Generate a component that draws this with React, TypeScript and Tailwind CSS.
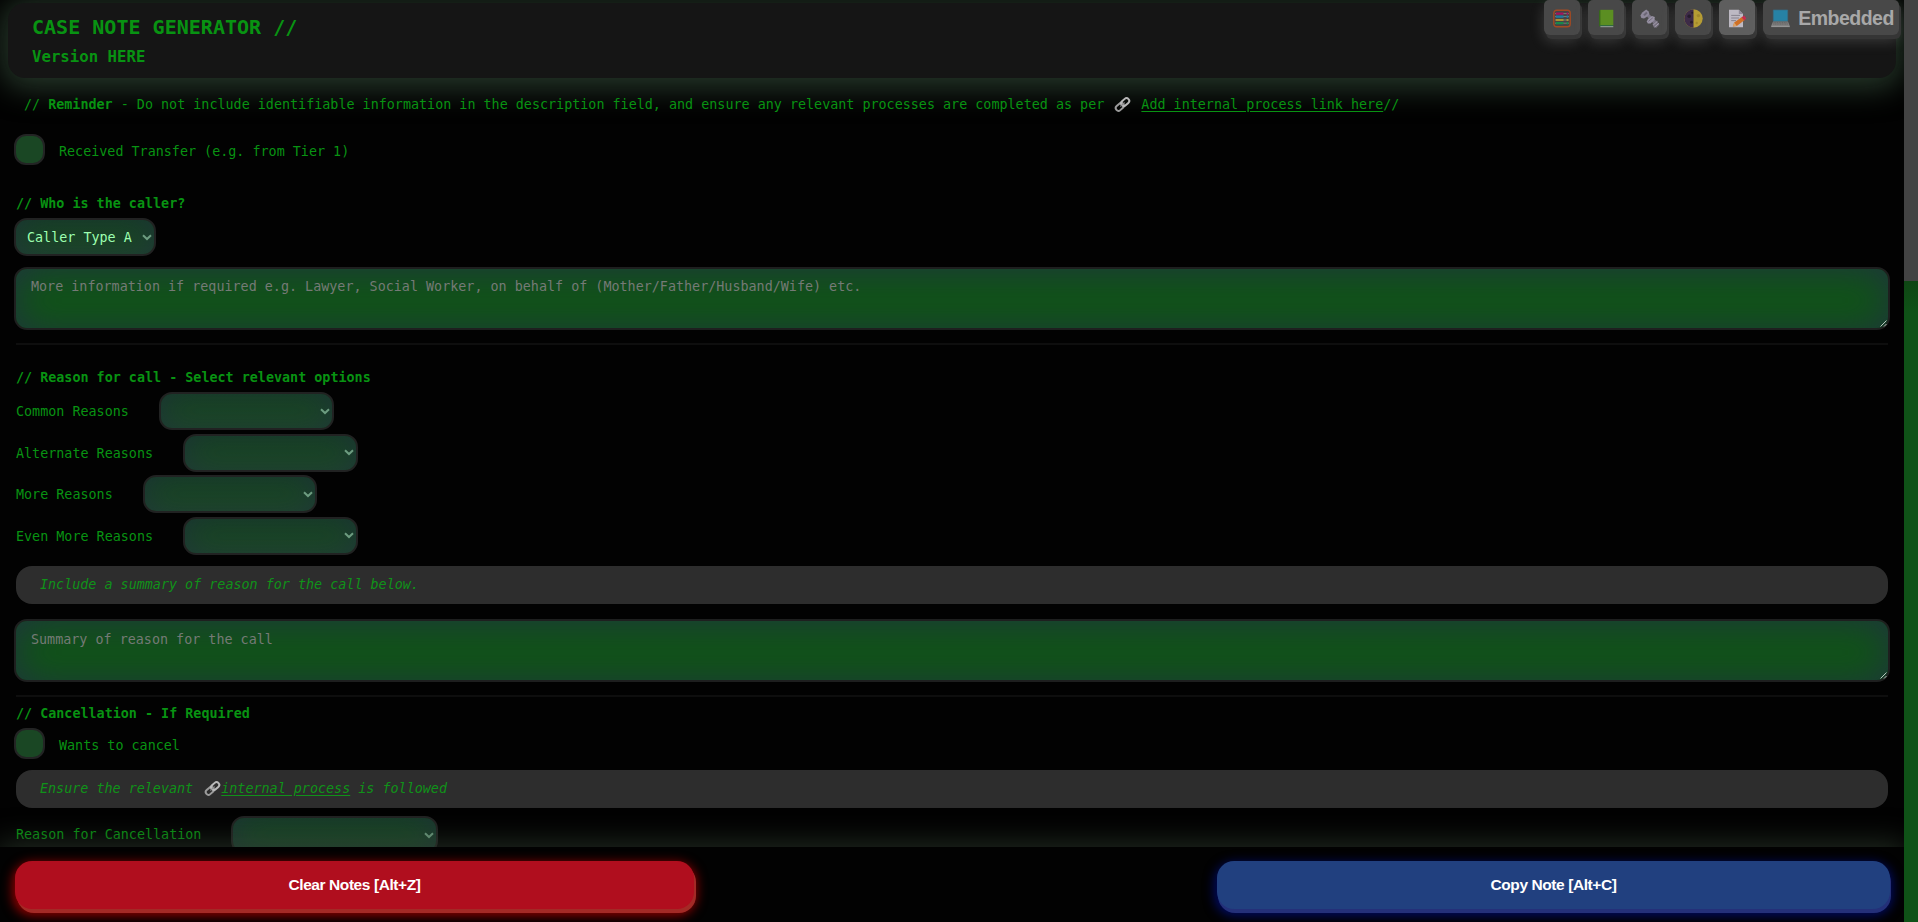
import type { ReactNode } from "react";

const fieldShadow = "shadow-[inset_0_2px_38px_0_rgba(36,42,74,0.76)]";

function Mono({ children, className = "" }: { children: ReactNode; className?: string }) {
  return <span className={`whitespace-pre ${className}`}>{children}</span>;
}

function Heading({ children, className = "" }: { children: ReactNode; className?: string }) {
  return (
    <h2 className={`ml-[16px] h-[20px] shrink-0 whitespace-pre pt-px font-bold leading-[20px] text-[#089312] ${className}`}>
      {children}
    </h2>
  );
}

function Chevron() {
  return (
    <svg width="10" height="7" viewBox="0 0 10 7" className="shrink-0" fill="none" stroke="#6d9c80" strokeWidth="2">
      <path d="M1 1.2 5 5 9 1.2" />
    </svg>
  );
}

function Select({ value = "", className = "" }: { value?: string; className?: string }) {
  return (
    <div
      className={`flex h-[38px] shrink-0 items-center justify-between rounded-[13px] border-2 border-[#212222] bg-linear-to-b from-[#15431f] to-[#1c4a25] pr-[2px] pl-[11px] text-[#9dffb0] shadow-[inset_0_0_34px_-3px_rgba(34,38,72,0.6)] ${className}`}
    >
      <Mono className="pt-[2px]">{value}</Mono>
      <Chevron />
    </div>
  );
}

function Area({ placeholder, className = "" }: { placeholder: string; className?: string }) {
  return (
    <div
      className={`relative ml-[14px] h-[63px] w-[1876px] shrink-0 rounded-[13px] border-2 border-[#1e1f1f] bg-[#105417] pt-[8px] pl-[15px] leading-[20px] text-[#757a76] ${fieldShadow} ${className}`}
    >
      <Mono>{placeholder}</Mono>
      <svg width="7" height="7" viewBox="0 0 7 7" className="absolute right-[1px] bottom-[1px]" stroke="#b8c6bc" strokeWidth="1">
        <path d="M0.5 6.5 6.5 0.5M4 6.5 6.5 4" />
      </svg>
    </div>
  );
}

function Check({ label, className = "", labelClass = "" }: { label: string; className?: string; labelClass?: string }) {
  return (
    <label className={`ml-[14px] flex h-[31px] shrink-0 items-center ${className}`}>
      <span className="mr-[14px] h-[31px] w-[31px] rounded-[12px] border-2 border-[#232424] bg-[#1a4724]" />
      <Mono className={labelClass}>{label}</Mono>
    </label>
  );
}

function Pill({ children, className = "" }: { children: ReactNode; className?: string }) {
  return (
    <p
      className={`mx-[16px] flex h-[38px] shrink-0 items-center rounded-[16px] bg-[#2d2d2d] pl-[24px] italic text-[#109219] ${className}`}
    >
      {children}
    </p>
  );
}

function LinkIcon({ className = "" }: { className?: string }) {
  return (
    <svg width="17" height="17" viewBox="0 0 17 17" className={`shrink-0 ${className}`} fill="none" strokeLinecap="round">
      <g transform="rotate(-42 8.5 8.5)">
        <rect x="0.4" y="5.8" width="9" height="5.4" rx="2.7" stroke="#9b9b9b" strokeWidth="2" />
        <rect x="7.6" y="5.8" width="9" height="5.4" rx="2.7" stroke="#b8b8b8" strokeWidth="2" />
        <path d="M6 8.5h5" stroke="#8a8a8a" strokeWidth="1.2" />
      </g>
    </svg>
  );
}

function AbacusIcon() {
  const rows = [
    { y: 4.6, c: "#a3125f" },
    { y: 7.6, c: "#1c7ba3" },
    { y: 11, c: "#ab9134" },
    { y: 14.2, c: "#158a4c" },
  ];
  return (
    <svg width="18" height="19" viewBox="0 0 18 19">
      <rect x="0.8" y="1.2" width="16.4" height="16.6" rx="2.8" fill="#444" stroke="#a34a22" strokeWidth="1.4" />
      {rows.map((r) => (
        <g key={r.y}>
          <path d={`M2 ${r.y}H16`} stroke="#888" strokeWidth="0.8" />
          <path d={`M2.8 ${r.y}H10.5M13.6 ${r.y}H15.3`} stroke={r.c} strokeWidth="2.2" />
        </g>
      ))}
    </svg>
  );
}

function BookIcon() {
  return (
    <svg width="18" height="19" viewBox="0 0 18 19">
      <path d="M2 1.5 4 0.8V18L2 17Z" fill="#37691a" />
      <path d="M3.4 0.8H16.3V16H3.4Z" fill="#5b8e22" />
      <path d="M2.6 16H16.3V17.2H3Z" fill="#316a3d" />
      <path d="M3.4 17.2H16.3V18.2H3.4Z" fill="#9aa7a0" />
    </svg>
  );
}

function BoltIcon() {
  return (
    <svg width="20" height="19" viewBox="0 0 20 19" className="shrink-0">
      <path d="M6 6.6 8.5 4.6 17 12.8 14.4 15.6Z" fill="#7d7888" />
      <path d="M0.4 6.4 2.2 3.4 6.2 0.6 8.6 2.6 9.4 5 6.6 8 4 9.6 1.4 9Z" fill="#8e889a" />
      <path d="M3.2 5.8 6.3 2.8 7.6 4.2 4.8 7Z" fill="#6b6674" />
      <path d="M6.8 12.4 8 10 12 7 14.8 8 14.4 11 10.6 14.4 7.8 14.6Z" fill="#9892a4" />
      <path d="M12.4 15 16.6 11.4 19.4 15.4 16.4 18.8 13.8 18.2Z" fill="#77717f" />
      <path d="M13.2 16 17.4 12.4M14.6 18 18.8 14.4" stroke="#a59fb0" strokeWidth="1" />
      <path d="M8.4 12.4 12.8 8.8" stroke="#6e6878" strokeWidth="0.9" />
    </svg>
  );
}

function MoonIcon() {
  return (
    <svg width="19" height="19" viewBox="0 0 19 19">
      <circle cx="9.5" cy="9.5" r="9.2" fill="#b59c34" />
      <path d="M9.5 0.3a9.2 9.2 0 0 0 0 18.4Z" fill="#3d2b47" />
      <circle cx="5.2" cy="7.2" r="1.8" fill="#251a2c" />
      <circle cx="7.5" cy="13.2" r="1.4" fill="#251a2c" />
      <circle cx="8.2" cy="3.8" r="1" fill="#251a2c" />
      <circle cx="14.4" cy="6.6" r="1.7" fill="#a1882b" />
      <circle cx="12.7" cy="14" r="1.2" fill="#a1882b" />
    </svg>
  );
}

function MemoIcon() {
  return (
    <svg width="19" height="19" viewBox="0 0 19 19">
      <path d="M1 0.8H10.8L15 5V18.3H1Z" fill="#bdb9c3" />
      <path d="M10.8 0.8V5H15Z" fill="#8f8a99" />
      <path d="M3.2 6.4H12M3.2 9H11M3.2 11.6H8" stroke="#88838f" strokeWidth="1" />
      <path d="M4.8 17.4 6.2 13.6 14.2 7.7 16.7 11.1 8.8 17Z" fill="#cf7026" />
      <path d="M4.8 17.4 6.2 13.6 8.8 17Z" fill="#d9a36a" />
      <path d="M13.6 8.2 16.3 6.6 18.4 9.4 16.2 11.4Z" fill="#c52c4f" />
    </svg>
  );
}

function LaptopIcon() {
  return (
    <svg width="19" height="19" viewBox="0 0 19 19" className="shrink-0">
      <path d="M2.3 1H16.7V12.2H2.3Z" fill="#2782a5" stroke="#356f86" strokeWidth="0.7" />
      <path d="M2 12.4H17L18.8 17H0.2Z" fill="#7f7f7f" />
      <path d="M2.5 13.6H16.5M2.2 15H16.8" stroke="#5d5d5d" strokeWidth="0.8" strokeDasharray="1.2 0.5" />
      <path d="M0.2 16.9H18.8V18.1H0.2Z" fill="#949494" />
    </svg>
  );
}

function Tool({ children, className = "" }: { children: ReactNode; className?: string }) {
  return (
    <button
      className={`flex h-[35px] items-center justify-center rounded-t-[5px] rounded-b-[6px] pt-[1px] shadow-[2px_4px_0_#353535,0_6px_14px_rgba(190,190,190,0.24)] ${className}`}
    >
      {children}
    </button>
  );
}

const reasons = [
  { label: "Common Reasons", width: "w-[175px]" },
  { label: "Alternate Reasons", width: "w-[175px]" },
  { label: "More Reasons", width: "w-[174px]" },
  { label: "Even More Reasons", width: "w-[175px]" },
];

export default function App() {
  return (
    <div className="flex h-[922px] w-[1918px] overflow-hidden bg-[#020202] font-['DejaVu_Sans_Mono',monospace] text-[13.4px] text-[#089312]">
      <div className="relative flex w-[1904px] flex-col overflow-hidden">
        <main className="flex h-[847px] flex-col overflow-hidden">
          <header className="mt-[3px] ml-[8px] h-[75px] w-[1888px] shrink-0 rounded-[17px] bg-[#151515] pl-[24px] font-bold text-[#089312] shadow-[0_4px_30px_6px_#26382a]">
            <h1 className="pt-[9px] text-[20.05px] leading-[30px]">CASE NOTE GENERATOR //</h1>
            <p className="mt-[3px] text-[15.7px] leading-[24px]">Version HERE</p>
          </header>

          <p className="relative mt-[14px] ml-[24px] flex h-[26px] shrink-0 items-center">
            <Mono>{"// "}</Mono>
            <b>Reminder</b>
            <Mono>
              {" - Do not include identifiable information in the description field, and ensure any relevant processes are completed as per "}
            </Mono>
            <LinkIcon className="mr-[10px] mb-[2px] ml-[2px]" />
            <a className="whitespace-pre underline underline-offset-2">Add internal process link here</a>
            <Mono>{"//"}</Mono>
          </p>

          <Check className="mt-[16px]" labelClass="mt-[5px]" label="Received Transfer (e.g. from Tier 1)" />

          <Heading className="mt-[28px]">{"// Who is the caller?"}</Heading>
          <Select value="Caller Type A" className="mt-[5px] ml-[14px] w-[142px]" />
          <Area className="mt-[11px]" placeholder="More information if required e.g. Lawyer, Social Worker, on behalf of (Mother/Father/Husband/Wife) etc." />
          <hr className="mx-[16px] mt-[13px] h-[2px] shrink-0 border-0 bg-[#0e0e0e]" />

          <Heading className="mt-[22px]">{"// Reason for call - Select relevant options"}</Heading>
          <div className="mt-[5px] ml-[16px] flex h-[163px] shrink-0 flex-col justify-between">
            {reasons.map((r) => (
              <div key={r.label} className="flex h-[38px] items-center">
                <Mono className="mr-[30px] pt-[2px]">{r.label}</Mono>
                <Select className={r.width} />
              </div>
            ))}
          </div>
          <Pill className="mt-[11px]">Include a summary of reason for the call below.</Pill>
          <Area className="mt-[15px] pt-[9px]" placeholder="Summary of reason for the call" />
          <hr className="mx-[16px] mt-[13px] h-[2px] shrink-0 border-0 bg-[#0e0e0e]" />

          <Heading className="mt-[6px]">{"// Cancellation - If Required"}</Heading>
          <Check className="mt-[5px]" labelClass="mt-[5px]" label="Wants to cancel" />
          <Pill className="mt-[11px]">
            <Mono>{"Ensure the relevant "}</Mono>
            <LinkIcon className="mb-[2px] ml-[3px]" />
            <a className="whitespace-pre underline underline-offset-2">internal process</a>
            <Mono>{" is followed"}</Mono>
          </Pill>
          <div className="mt-[8px] ml-[16px] flex h-[38px] shrink-0 items-center">
            <Mono className="mr-[30px]">Reason for Cancellation</Mono>
            <Select className="w-[207px]" />
          </div>
        </main>

        <footer className="relative flex h-[75px] shrink-0 items-start justify-between bg-[#020202] pt-[14px] pr-[14px] pl-[15px] font-['Liberation_Sans',Arial,sans-serif] text-[15.5px] font-bold tracking-[-0.42px] text-white shadow-[0_-2px_30px_2px_rgba(48,64,48,0.66)]">
          <button className="h-[48px] w-[679px] rounded-[17px] bg-[#b00e1e] pb-px shadow-[2px_4px_0_#a32a26,0_4px_12px_2px_#a00000]">
            Clear Notes [Alt+Z]
          </button>
          <button className="h-[48px] w-[673px] rounded-[17px] bg-[#21407f] pb-px shadow-[1px_4px_0_#243079,0_4px_12px_2px_#000c70]">
            Copy Note [Alt+C]
          </button>
        </footer>

        <nav className="absolute top-0 right-[5px] flex gap-[8px]">
          <Tool className="w-[36px] bg-[#484848]"><AbacusIcon /></Tool>
          <Tool className="w-[36px] bg-[#484848]"><BookIcon /></Tool>
          <Tool className="w-[35px] bg-[#484848]"><BoltIcon /></Tool>
          <Tool className="w-[36px] bg-[#484848]"><MoonIcon /></Tool>
          <Tool className="w-[36px] bg-[#5e5e5e]"><MemoIcon /></Tool>
          <Tool className="w-[136px] gap-[8px] bg-[#484848] pl-[3px] font-['Liberation_Sans',Arial,sans-serif] text-[19.5px] font-bold tracking-[-0.5px] text-[#a8a8a8]">
            <LaptopIcon />
            <span className="leading-[34px]">Embedded</span>
          </Tool>
        </nav>
      </div>

      <div className="h-full w-[14px] bg-[#0f5217]">
        <div className="h-[281px] bg-[#434343]" />
        <div className="h-[32px] bg-linear-to-b from-[#0f4614] to-[#0f5217]" />
      </div>
    </div>
  );
}
